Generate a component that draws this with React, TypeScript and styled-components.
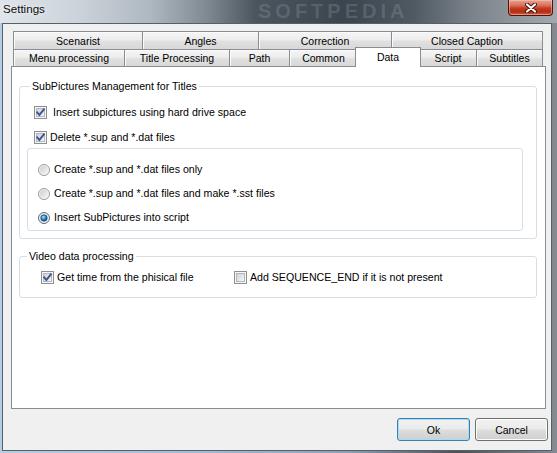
import React, { useId } from "react";
import styled, { createGlobalStyle } from "styled-components";

const GlobalStyle = createGlobalStyle`
  html, body { margin: 0; padding: 0; background: #fff; }
  body { font-family: "Liberation Sans", Arial, sans-serif; }
  #root { width: 557px; height: 453px; }
`;

const Window = styled.div`
  width: 557px;
  height: 453px;
  box-sizing: border-box;
  display: flex;
  flex-direction: column;
  overflow: hidden;
  background: linear-gradient(90deg, #b4cde4 0%, #a2bdd6 35%, #8aa2b8 62%, #4b525a 82%, #858b91 100%);
  font-family: "Liberation Sans", Arial, sans-serif;
  color: #000;
`;

const TitleBar = styled.div`
  position: relative;
  flex: none;
  height: 23px;
  display: flex;
  align-items: flex-start;
  background: linear-gradient(90deg, #dfe5ea 0%, #ccd3da 14%, #aeb8c1 27%, #7f8a93 37%, #4a555e 46%, #3b454e 62%, #4f5962 74%, #7c848b 85%, #a3a9ae 100%);
`;

const Watermark = styled.span`
  position: absolute;
  left: 258px;
  top: 1px;
  font: bold 20px/20px "Liberation Sans", Arial, sans-serif;
  letter-spacing: 4px;
  color: rgba(190, 200, 208, 0.2);
  pointer-events: none;
`;

const Title = styled.span`
  position: relative;
  padding: 2px 0 0 3px;
  font-size: 11.6px;
  line-height: 14px;
  color: #0b0b0b;
  text-shadow: 0 0 4px rgba(255, 255, 255, 0.9);
`;

const CloseButton = styled.div`
  position: relative;
  margin: 0 4px 0 auto;
  width: 45px;
  height: 16px;
  box-sizing: border-box;
  border: 1px solid #4a150d;
  border-top: none;
  border-radius: 0 0 4px 4px;
  background: linear-gradient(180deg, #e7a394 0%, #d9735d 35%, #c23b20 55%, #b42d14 80%, #d7644a 100%);
  box-shadow: inset 0 0 0 1px rgba(255, 210, 200, 0.45);
  display: flex;
  align-items: center;
  justify-content: center;
`;

const Client = styled.div`
  flex: 1;
  margin: 0 5px 2px 2px;
  border: 1px solid #56606a;
  background: #f0f0f0;
  padding: 7px 3px 9px 8px;
  display: flex;
  flex-direction: column;
  min-height: 0;
`;

const TabControl = styled.div`
  width: 535px;
  display: flex;
  flex-direction: column;
`;

const TabStrip = styled.div`
  padding: 0 2px;
  display: flex;
  flex-direction: column;
`;

const TabRow = styled.div<{ $h: number }>`
  display: flex;
  height: ${(p) => p.$h}px;
`;

const Tab = styled.div<{ $w: number; $selected?: boolean }>`
  position: relative;
  box-sizing: border-box;
  flex: none;
  width: ${(p) => p.$w + (p.$selected ? 4 : 0)}px;
  height: ${(p) => (p.$selected ? "calc(100% + 3px)" : "100%")};
  margin: ${(p) => (p.$selected ? "-2px -2px -1px" : "0")};
  z-index: ${(p) => (p.$selected ? 2 : 1)};
  border-top: 1px solid #898c95;
  border-left: 1px solid #898c95;
  border-right: ${(p) => (p.$selected ? "1px solid #898c95" : "none")};
  &:last-child { border-right: 1px solid #898c95; }
  background: ${(p) =>
    p.$selected
      ? "#ffffff"
      : "linear-gradient(180deg, #f5f5f5 0%, #ededed 45%, #e0e0e0 55%, #d8d8d8 100%)"};
  box-shadow: ${(p) => (p.$selected ? "none" : "inset 1px 1px 0 #fbfbfb")};
  display: flex;
  align-items: center;
  justify-content: center;
  padding-bottom: ${(p) => (p.$selected ? 2 : 0)}px;
  font-size: 10.5px;
  line-height: 12px;
  color: #000;
  white-space: nowrap;
`;

const Panel = styled.div`
  position: relative;
  z-index: 1;
  flex: none;
  height: 343px;
  box-sizing: border-box;
  border: 1px solid #898c95;
  background: #ffffff;
  padding: 0 8px 0 7px;
  display: flex;
  flex-direction: column;
`;

const GroupBox = styled.fieldset<{ $top: number }>`
  margin: ${(p) => p.$top}px 0 0 0;
  padding: 0;
  min-width: 0;
  border: 1px solid #d5dfe5;
  border-radius: 3px;
`;

const Legend = styled.legend<{ $indent: number }>`
  margin-left: ${(p) => p.$indent}px;
  padding: 0 2px;
  font-size: 10.6px;
  line-height: 13px;
  color: #000;
`;

const GroupBody = styled.div<{ $pad: string }>`
  padding: ${(p) => p.$pad};
  display: flex;
  flex-direction: column;
`;

const InlineRow = styled.div<{ $indent?: number }>`
  display: flex;
  align-items: center;
  padding-left: ${(p) => p.$indent ?? 0}px;
`;

const OptionRow = styled.label<{ $mt?: number; $width?: number; $gap?: number }>`
  display: flex;
  align-items: center;
  gap: ${(p) => p.$gap ?? 3}px;
  height: 15px;
  margin-top: ${(p) => p.$mt ?? 0}px;
  width: ${(p) => (p.$width ? `${p.$width}px` : "auto")};
  flex: none;
  font-size: 10.6px;
  line-height: 13px;
  color: #000;
  white-space: pre;
`;

const InnerBox = styled.div`
  margin: 3px 13px 0 7px;
  border: 1px solid #d5dfe5;
  border-radius: 3px;
  padding: 13px 0 5px 10px;
  display: flex;
  flex-direction: column;
`;

const ButtonRow = styled.div`
  display: flex;
  justify-content: flex-end;
  gap: 5px;
  margin-top: 9px;
`;

const Button = styled.button<{ $default?: boolean }>`
  width: 73px;
  height: 23px;
  box-sizing: border-box;
  margin: 0;
  padding: 0;
  border: 1px solid ${(p) => (p.$default ? "#3c7fb1" : "#707070")};
  border-radius: 3px;
  background: linear-gradient(180deg, #f2f2f2 0%, #ebebeb 48%, #dddddd 52%, #cfcfcf 100%);
  box-shadow: inset 0 0 0 1px ${(p) => (p.$default ? "#a8dcf6" : "#fbfbfb")};
  font-family: "Liberation Sans", Arial, sans-serif;
  font-size: 10.5px;
  color: #000;
`;

function CheckBox({ checked }: { checked: boolean }) {
  const id = useId().replace(/:/g, "");
  return (
    <svg width="13" height="13" viewBox="0 0 13 13" style={{ flex: "none" }}>
      <defs>
        <linearGradient id={`cb${id}`} x1="0" y1="0" x2="1" y2="1">
          <stop offset="0" stopColor="#cdd1d6" />
          <stop offset="1" stopColor="#f7f7f7" />
        </linearGradient>
      </defs>
      <rect x="0.5" y="0.5" width="12" height="12" fill="#f6f6f6" stroke="#8e8f8f" />
      <rect x="2.5" y="2.5" width="8" height="8" fill={`url(#cb${id})`} stroke="#b4b8bd" />
      {checked && (
        <path d="M3.2 6.4 L5.4 8.9 L9.9 3.3" fill="none" stroke="#3d5796" strokeWidth="1.9" strokeLinecap="square" />
      )}
    </svg>
  );
}

function Radio({ checked }: { checked: boolean }) {
  const id = useId().replace(/:/g, "");
  return (
    <svg width="12" height="12" viewBox="0 0 12 12" style={{ flex: "none" }}>
      <defs>
        <linearGradient id={`rb${id}`} x1="0" y1="0" x2="1" y2="1">
          <stop offset="0" stopColor="#c9ccd0" />
          <stop offset="1" stopColor="#f8f8f8" />
        </linearGradient>
        <radialGradient id={`rd${id}`} cx="0.4" cy="0.35" r="0.7">
          <stop offset="0" stopColor="#b9ecff" />
          <stop offset="0.45" stopColor="#2c94d8" />
          <stop offset="1" stopColor="#0d3f78" />
        </radialGradient>
      </defs>
      <circle cx="6" cy="6" r="5.5" fill="#f4f4f4" stroke={checked ? "#5d6a78" : "#9a9b9c"} />
      <circle cx="6" cy="6" r="4" fill={`url(#rb${id})`} />
      {checked && <circle cx="6" cy="6" r="3.2" fill={`url(#rd${id})`} stroke="#123a66" strokeWidth="0.6" />}
    </svg>
  );
}

const row1 = [
  { label: "Scenarist", w: 129 },
  { label: "Angles", w: 116 },
  { label: "Correction", w: 133 },
  { label: "Closed Caption", w: 152 },
];

const row2 = [
  { label: "Menu processing", w: 111 },
  { label: "Title Processing", w: 105 },
  { label: "Path", w: 60 },
  { label: "Common", w: 68 },
  { label: "Data", w: 62, selected: true },
  { label: "Script", w: 57 },
  { label: "Subtitles", w: 67 },
];

export default function App() {
  return (
    <>
      <GlobalStyle />
      <Window>
        <TitleBar>
          <Watermark>SOFTPEDIA</Watermark>
          <Title>Settings</Title>
          <CloseButton>
            <svg width="12" height="10" viewBox="0 0 12 10">
              <path d="M2 1.5 L10 8.5 M10 1.5 L2 8.5" stroke="#3b0e07" strokeWidth="4" strokeLinecap="round" />
              <path d="M2 1.5 L10 8.5 M10 1.5 L2 8.5" stroke="#ffffff" strokeWidth="2.2" strokeLinecap="round" />
            </svg>
          </CloseButton>
        </TitleBar>
        <Client>
          <TabControl>
            <TabStrip>
              <TabRow $h={18}>
                {row1.map((t) => (
                  <Tab key={t.label} $w={t.w}>{t.label}</Tab>
                ))}
              </TabRow>
              <TabRow $h={17}>
                {row2.map((t) => (
                  <Tab key={t.label} $w={t.w} $selected={t.selected}>{t.label}</Tab>
                ))}
              </TabRow>
            </TabStrip>
            <Panel>
              <GroupBox $top={13}>
                <Legend $indent={10}>SubPictures Management for Titles</Legend>
                <GroupBody $pad="12px 0 7px 0">
                  <InlineRow $indent={14}>
                    <OptionRow>
                      <CheckBox checked />
                      {" Insert subpictures using hard drive space"}
                    </OptionRow>
                  </InlineRow>
                  <InlineRow $indent={14}>
                    <OptionRow $mt={10}>
                      <CheckBox checked />
                      Delete *.sup and *.dat files
                    </OptionRow>
                  </InlineRow>
                  <InnerBox>
                    <OptionRow $gap={4}>
                      <Radio checked={false} />
                      Create *.sup and *.dat files only
                    </OptionRow>
                    <OptionRow $gap={4} $mt={9}>
                      <Radio checked={false} />
                      Create *.sup and *.dat files and make *.sst files
                    </OptionRow>
                    <OptionRow $gap={4} $mt={9}>
                      <Radio checked />
                      Insert SubPictures into script
                    </OptionRow>
                  </InnerBox>
                </GroupBody>
              </GroupBox>
              <GroupBox $top={11}>
                <Legend $indent={7}>Video data processing</Legend>
                <GroupBody $pad="7px 0 12px 21px">
                  <InlineRow>
                    <OptionRow $width={193}>
                      <CheckBox checked />
                      Get time from the phisical file
                    </OptionRow>
                    <OptionRow>
                      <CheckBox checked={false} />
                      Add SEQUENCE_END if it is not present
                    </OptionRow>
                  </InlineRow>
                </GroupBody>
              </GroupBox>
            </Panel>
          </TabControl>
          <ButtonRow>
            <Button $default>Ok</Button>
            <Button>Cancel</Button>
          </ButtonRow>
        </Client>
      </Window>
    </>
  );
}
